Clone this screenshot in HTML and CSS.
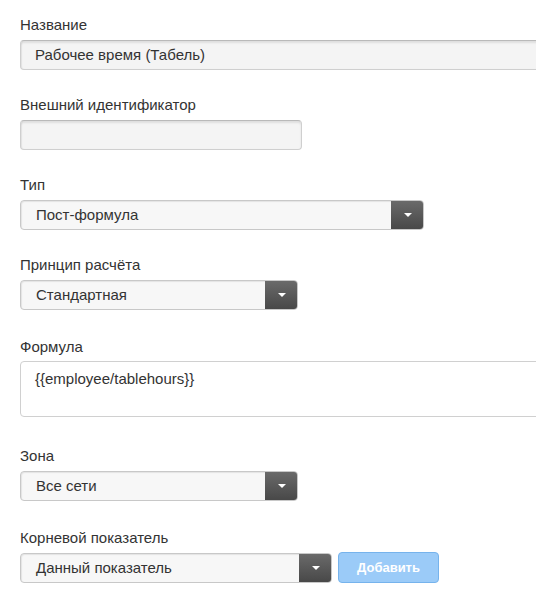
FILE: index.html
```html
<!DOCTYPE html>
<html lang="ru">
<head>
<meta charset="utf-8">
<title>Форма показателя</title>
<link rel="stylesheet" href="styles.css">
</head>
<body>
<form class="form">
  <div class="field">
    <label class="label">Название</label>
    <div class="input input--full">Рабочее время (Табель)</div>
  </div>
  <div class="field">
    <label class="label">Внешний идентификатор</label>
    <div class="input input--id"></div>
  </div>
  <div class="field">
    <label class="label">Тип</label>
    <div class="select select--type">
      <span class="select-text">Пост-формула</span>
      <span class="select-btn"><span class="caret"></span></span>
    </div>
  </div>
  <div class="field field--more">
    <label class="label">Принцип расчёта</label>
    <div class="select select--short">
      <span class="select-text">Стандартная</span>
      <span class="select-btn"><span class="caret"></span></span>
    </div>
  </div>
  <div class="field field--most">
    <label class="label label--tight">Формула</label>
    <div class="textarea">{{employee/tablehours}}</div>
  </div>
  <div class="field field--more">
    <label class="label">Зона</label>
    <div class="select select--short">
      <span class="select-text">Все сети</span>
      <span class="select-btn"><span class="caret"></span></span>
    </div>
  </div>
  <div class="field">
    <label class="label">Корневой показатель</label>
    <div class="row">
      <div class="select select--root">
        <span class="select-text">Данный показатель</span>
        <span class="select-btn"><span class="caret"></span></span>
      </div>
      <span class="btn-add">Добавить</span>
    </div>
  </div>
</form>
</body>
</html>
```
FILE: styles.css
```css
html, body {
  margin: 0;
  padding: 0;
  background: #ffffff;
  overflow: hidden;
}
body {
  font-family: "Liberation Sans", Arial, sans-serif;
  font-size: 15px;
  color: #333333;
}
.form {
  padding: 15px 0 0 20px;
  width: 516px;
  overflow: hidden;
}
.field {
  display: flex;
  flex-direction: column;
  align-items: flex-start;
  margin-bottom: 25px;
}
.field--more {
  margin-bottom: 27px;
}
.field--most {
  margin-bottom: 29px;
}
.label {
  display: block;
  line-height: 20px;
  margin-bottom: 5px;
  color: #333333;
}
.label--tight {
  margin-bottom: 4px;
}
.input {
  box-sizing: border-box;
  flex-shrink: 0;
  height: 30px;
  line-height: 28px;
  padding: 0 14px;
  background: #f4f4f4;
  border: 1px solid #cfcfcf;
  border-top-color: #b9b9b9;
  border-radius: 4px;
  box-shadow: inset 0 2px 2px rgba(0, 0, 0, 0.09), inset 1px 0 1px rgba(0, 0, 0, 0.05);
  color: #333333;
}
.input--full {
  width: 600px;
}
.input--id {
  width: 282px;
}
.select {
  box-sizing: border-box;
  display: flex;
  height: 30px;
  background: #f7f7f7;
  border: 1px solid #c8c8c8;
  border-radius: 4px;
  box-shadow: inset 1px 1px 1px rgba(0, 0, 0, 0.08);
  overflow: hidden;
}
.select--type {
  width: 404px;
}
.select--short {
  width: 278px;
}
.select--root {
  width: 312px;
}
.select-text {
  flex: 1;
  line-height: 28px;
  padding-left: 15px;
  color: #333333;
}
.select-btn {
  width: 33px;
  margin: -1px -1px -1px 0;
  display: flex;
  align-items: center;
  justify-content: center;
  background: linear-gradient(#6b6b6b, #474747);
  border-radius: 0 4px 4px 0;
}
.caret {
  width: 0;
  height: 0;
  border-left: 4px solid transparent;
  border-right: 4px solid transparent;
  border-top: 4px solid #ffffff;
}
.textarea {
  box-sizing: border-box;
  width: 600px;
  height: 56px;
  padding: 8px 14px;
  line-height: 18px;
  background: #ffffff;
  border: 1px solid #d0d0d0;
  border-radius: 4px;
  color: #333333;
}
.row {
  display: flex;
  gap: 6px;
  align-items: flex-start;
}
.btn-add {
  box-sizing: border-box;
  width: 101px;
  height: 31px;
  margin-top: -1px;
  display: flex;
  align-items: center;
  justify-content: center;
  background: #9bcbf8;
  border: 1px solid #76b3ec;
  border-radius: 4px;
  color: #ffffff;
  font-weight: bold;
  font-size: 13px;
}
```
